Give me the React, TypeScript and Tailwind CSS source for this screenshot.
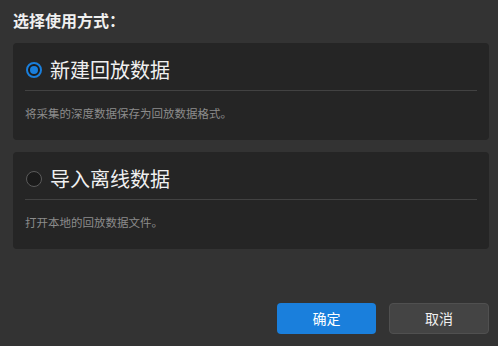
import { useState } from 'react'

const options = [
  { id: 'new', title: '新建回放数据', desc: '将采集的深度数据保存为回放数据格式。' },
  { id: 'import', title: '导入离线数据', desc: '打开本地的回放数据文件。' },
]

function Radio({ checked }: { checked: boolean }) {
  return checked ? (
    <span className="flex h-[16px] w-[16px] items-center justify-center rounded-full border-[2px] border-[#1a7fdc] bg-[#1c1c1c]">
      <span className="h-[8px] w-[8px] rounded-full bg-[#1a7fdc]" />
    </span>
  ) : (
    <span className="h-[16px] w-[16px] rounded-full border-[1.5px] border-[#5a5a5a] bg-[#1a1a1a]" />
  )
}

export default function App() {
  const [mode, setMode] = useState('new')

  return (
    <div
      className="flex h-[346px] w-[498px] flex-col bg-[#333333] pl-[13px] pr-[9px] text-[#f0f0f0]"
      style={{ fontFamily: '"Noto Sans CJK SC", "Noto Sans", sans-serif' }}
    >
      <h1 className="h-[43px] pt-[9px] text-[16px] font-bold leading-[22px]">选择使用方式：</h1>
      <div className="flex flex-col gap-[12px]">
        {options.map((opt) => (
          <div
            key={opt.id}
            className="cursor-pointer rounded-[4px] bg-[#252525] px-[12px] pt-[16px] pb-[19px]"
            onClick={() => setMode(opt.id)}
          >
            <div className="flex h-[22px] items-center gap-[8px] pl-[1px]">
              <Radio checked={mode === opt.id} />
              <span className="text-[20px] leading-[22px]">{opt.title}</span>
            </div>
            <div className="mt-[9px] h-px bg-[#424242]" />
            <p className="mt-[14px] text-[11.5px] leading-[16px] text-[#8c8c8c]">{opt.desc}</p>
          </div>
        ))}
      </div>
      <div className="mt-auto flex justify-end gap-[13px] pb-[12px]">
        <button className="h-[31px] w-[99px] rounded-[4px] bg-[#1a7fdc] text-[14px] text-white">确定</button>
        <button className="h-[31px] w-[100px] rounded-[4px] border border-[#505050] bg-[#444444] text-[14px] text-[#f0f0f0]">
          取消
        </button>
      </div>
    </div>
  )
}
